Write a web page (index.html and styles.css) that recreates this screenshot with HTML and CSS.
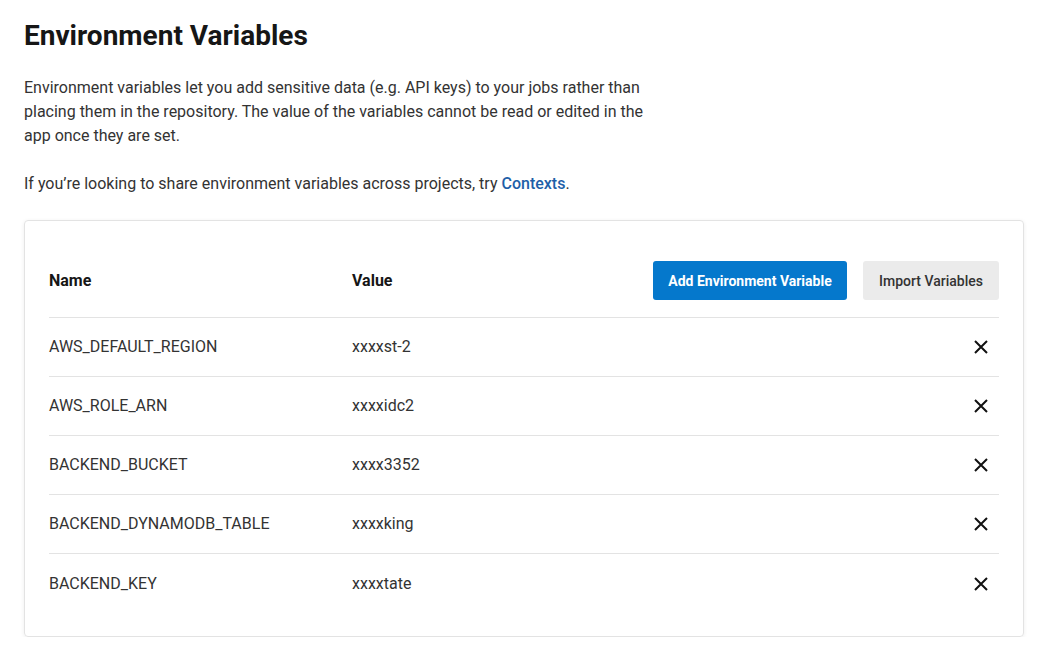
FILE: index.html
```html
<!DOCTYPE html>
<html lang="en">
<head>
<meta charset="utf-8">
<title>Environment Variables</title>
<link rel="stylesheet" href="styles.css">
</head>
<body>
<main class="page">
  <h1 class="title">Environment Variables</h1>
  <p class="intro">Environment variables let you add sensitive data (e.g. API keys) to your jobs rather than placing them in the repository. The value of the variables cannot be read or edited in the app once they are set.</p>
  <p class="intro">If you’re looking to share environment variables across projects, try <a class="link" href="#">Contexts</a>.</p>
  <section class="card">
    <div class="row head">
      <div class="col-name">Name</div>
      <div class="col-value">Value</div>
      <div class="actions">
        <button class="btn primary">Add Environment Variable</button>
        <button class="btn secondary">Import Variables</button>
      </div>
    </div>
    <div class="row">
      <div class="col-name">AWS_DEFAULT_REGION</div>
      <div class="col-value">xxxxst-2</div>
      <button class="del" aria-label="Delete"><svg viewBox="0 0 14 14" width="14" height="14"><path d="M1 1L13 13M13 1L1 13" stroke="#111" stroke-width="2" fill="none"/></svg></button>
    </div>
    <div class="row">
      <div class="col-name">AWS_ROLE_ARN</div>
      <div class="col-value">xxxxidc2</div>
      <button class="del" aria-label="Delete"><svg viewBox="0 0 14 14" width="14" height="14"><path d="M1 1L13 13M13 1L1 13" stroke="#111" stroke-width="2" fill="none"/></svg></button>
    </div>
    <div class="row">
      <div class="col-name">BACKEND_BUCKET</div>
      <div class="col-value">xxxx3352</div>
      <button class="del" aria-label="Delete"><svg viewBox="0 0 14 14" width="14" height="14"><path d="M1 1L13 13M13 1L1 13" stroke="#111" stroke-width="2" fill="none"/></svg></button>
    </div>
    <div class="row">
      <div class="col-name">BACKEND_DYNAMODB_TABLE</div>
      <div class="col-value">xxxxking</div>
      <button class="del" aria-label="Delete"><svg viewBox="0 0 14 14" width="14" height="14"><path d="M1 1L13 13M13 1L1 13" stroke="#111" stroke-width="2" fill="none"/></svg></button>
    </div>
    <div class="row last">
      <div class="col-name">BACKEND_KEY</div>
      <div class="col-value">xxxxtate</div>
      <button class="del" aria-label="Delete"><svg viewBox="0 0 14 14" width="14" height="14"><path d="M1 1L13 13M13 1L1 13" stroke="#111" stroke-width="2" fill="none"/></svg></button>
    </div>
  </section>
</main>
</body>
</html>
```
FILE: styles.css
```css
* { box-sizing: border-box; }
html, body { margin: 0; padding: 0; background: #fff; }
body {
  font-family: Roboto, "Liberation Sans", Arial, sans-serif;
  color: #333;
  font-size: 16px;
  line-height: 24px;
}
.page {
  padding: 20px 22px 0 24px;
}
.title {
  margin: 0;
  font-size: 28px;
  line-height: 32px;
  font-weight: 700;
  color: #161616;
}
.intro {
  margin: 0;
  max-width: 645px;
}
.title + .intro { margin-top: 24px; }
.intro + .intro { margin-top: 24px; }
.link {
  color: #1e5fa8;
  text-decoration: none;
  font-weight: 500;
}
.card {
  margin-top: 24px;
  border: 1px solid #e3e3e3;
  border-radius: 4px;
  box-shadow: 0 1px 4px rgba(0,0,0,0.07);
  padding: 40px 24px 23px 24px;
}
.row {
  display: flex;
  align-items: center;
  height: 59px;
  border-bottom: 1px solid #e3e3e3;
}
.row.last { border-bottom: none; height: 59px; }
.row.head {
  height: 57px;
  align-items: flex-start;
}
.row.head .col-name,
.row.head .col-value {
  font-weight: 700;
  color: #161616;
  line-height: 39px;
}
.col-name { width: 303px; }
.col-value { flex: 1; }
.actions {
  display: flex;
  gap: 16px;
}
.btn {
  font-family: inherit;
  font-size: 14px;
  height: 39px;
  border: none;
  border-radius: 3px;
  padding: 0;
  white-space: nowrap;
  cursor: pointer;
}
.btn.primary {
  background: #0578cc;
  color: #fff;
  font-weight: 700;
  width: 194px;
}
.btn.secondary {
  background: #ebebeb;
  color: #333;
  font-weight: 500;
  width: 136px;
}
.del {
  background: none;
  border: none;
  padding: 0;
  margin-right: 11px;
  width: 14px;
  height: 14px;
  display: flex;
  cursor: pointer;
}
```
